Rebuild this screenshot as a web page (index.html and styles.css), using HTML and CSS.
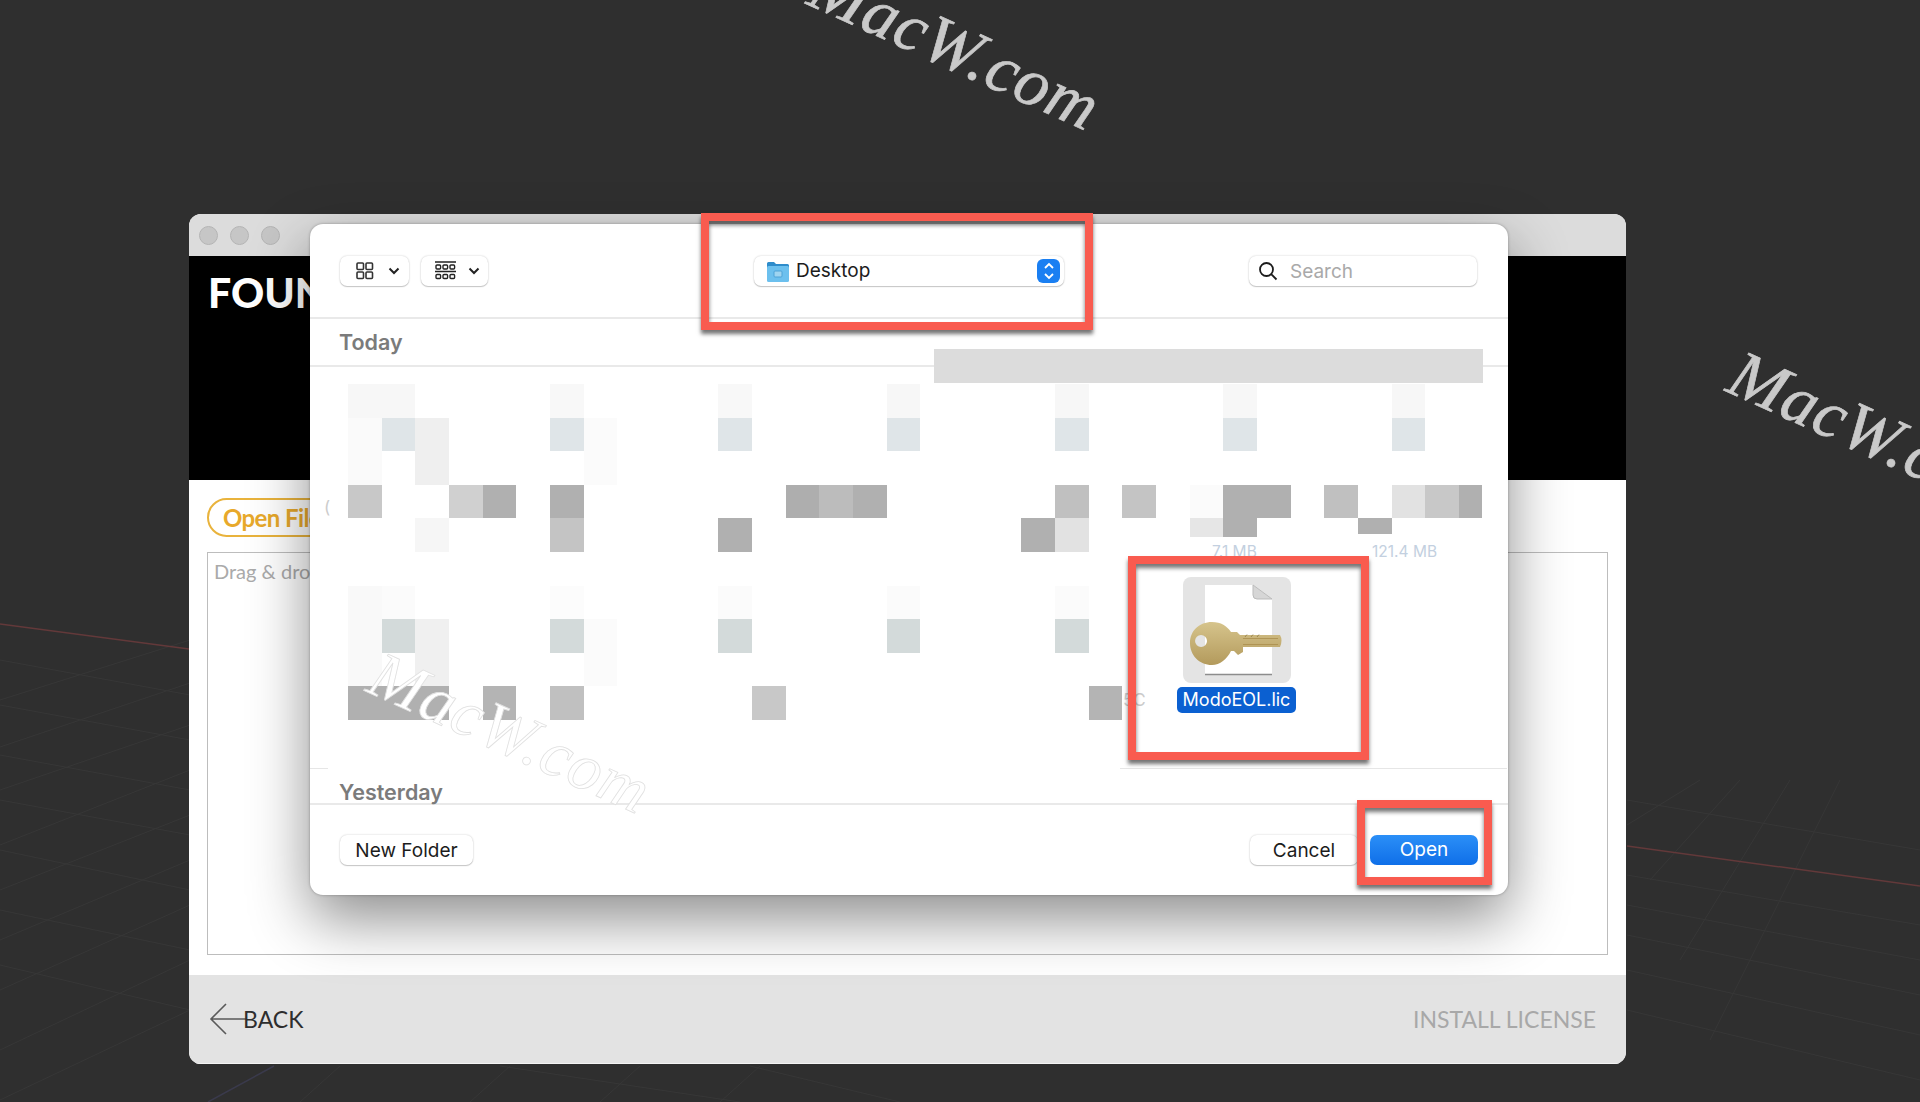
FILE: index.html
```html
<!DOCTYPE html>
<html lang="en">
<head>
    <meta charset="UTF-8">
    <title>Install License</title>
    <link rel="stylesheet" href="styles.css">
</head>
<body>
    <svg class="floor" width="1920" height="1102" viewBox="0 0 1920 1102">
        <g class="floor-a">
            <path d="M0 700L190 640M0 747L190 683M0 790L190 725M0 845L190 770M0 890L190 815M0 940L190 860M0 990L190 905M0 1050L190 960M0 1100L190 1010"/>
            <path d="M300 1102L340 1066M470 1102L510 1066M600 1102L640 1066M720 1102L760 1066"/>
            <path d="M1627 825L1700 780M1650 880L1740 780M1680 960L1790 780M1710 1040L1840 780"/>
        </g>
        <g class="floor-b">
            <path d="M0 660L190 695M0 705L190 740M0 755L190 790M0 800L190 835M0 850L190 890M0 910L190 950M0 965L190 1010"/>
            <path d="M1627 800L1920 850M1627 875L1920 925M1627 905L1920 960M1627 935L1920 995M1627 970L1920 1035M1627 1010L1920 1080"/>
            <path d="M500 1066L740 1102M750 1066L900 1102"/>
        </g>
        <path class="floor-red" d="M0 624L189 649M1627 846L1920 886"/>
        <path class="floor-blue" d="M274 1066L208 1102"/>
    </svg>

    <span class="watermark wm-top">MacW.com</span>
    <span class="watermark wm-right">MacW.com</span>

    <div class="app-window">
        <div class="titlebar">
            <span class="light"></span>
            <span class="light"></span>
            <span class="light"></span>
        </div>
        <div class="brand">FOUNDRY</div>
        <div class="app-body">
            <div><span class="pill">Open File</span></div>
            <div class="dropzone">Drag &amp; drop</div>
        </div>
        <div class="app-footer">
            <span class="back">
                <svg class="back-arrow" width="38" height="32" viewBox="0 0 38 32"><path d="M37 16H2M17 1L2 16L17 31"/></svg>
                <span class="back-label">BACK</span>
            </span>
            <span class="install">INSTALL LICENSE</span>
        </div>
    </div>

    <div class="dialog">
        <div class="toolbar">
            <div class="toolbar-left">
                <div class="btn view-btn view-one">
                    <svg width="18" height="18" viewBox="0 0 18 18"><rect x="1" y="1" width="6.5" height="6.5" rx="1"/><rect x="10" y="1" width="6.5" height="6.5" rx="1"/><rect x="1" y="10" width="6.5" height="6.5" rx="1"/><rect x="10" y="10" width="6.5" height="6.5" rx="1"/></svg>
                    <svg class="chev" width="12" height="8" viewBox="0 0 12 8"><path d="M1.5 1.5L6 6L10.5 1.5"/></svg>
                </div>
                <div class="btn view-btn view-two">
                    <svg class="strip-icon" width="21" height="20" viewBox="0 0 21 20"><path d="M0 1H21M0 10.500H21"/><rect x="1" y="4" width="4.600" height="4" rx="1"/><rect x="8" y="4" width="4.600" height="4" rx="1"/><rect x="15" y="4" width="4.600" height="4" rx="1"/><rect x="1" y="13.500" width="4.600" height="4" rx="1"/><rect x="8" y="13.500" width="4.600" height="4" rx="1"/><rect x="15" y="13.500" width="4.600" height="4" rx="1"/></svg>
                    <svg class="chev" width="12" height="8" viewBox="0 0 12 8"><path d="M1.5 1.5L6 6L10.5 1.5"/></svg>
                </div>
            </div>
            <div class="btn location">
                <svg width="22" height="21" viewBox="0 0 22 21">
                    <path class="folder-back" d="M0 2.500Q0 1 1.500 1H7L9 3H20.500Q22 3 22 4.500V8H0Z"/>
                    <rect class="folder-front" y="5" width="22" height="16" rx="1.500"/>
                    <rect class="folder-mark" x="7" y="10" width="8" height="6" rx="1"/>
                </svg>
                <span class="location-name">Desktop</span>
                <span class="stepper">
                    <svg width="12" height="20" viewBox="0 0 12 20"><path d="M2 7L6 3L10 7M2 13L6 17L10 13"/></svg>
                </span>
            </div>
            <div class="btn search">
                <svg width="20" height="20" viewBox="0 0 20 20"><circle cx="8.500" cy="8.500" r="6.500"/><path d="M13.200 13.200L18.500 18.500"/></svg>
                <span class="search-text">Search</span>
            </div>
        </div>

        <div class="section-head today">Today</div>
        <div class="grey-bar"></div>

        <div class="files">
            <svg class="mosaic" width="1197" height="403" viewBox="0 0 1197 403">
                <g transform="translate(38 17) scale(33.67 33.6)" shape-rendering="crispEdges">
                    <rect x="0" y="0" width="2" height="1" fill="#f7f7f7"/><rect x="0" y="1" width="1" height="2" fill="#fafafa"/><rect x="1" y="1" width="1" height="1" fill="#dfe5e8"/><rect x="2" y="1" width="1" height="2" fill="#efefef"/>
                    <rect x="0" y="3" width="1" height="1" fill="#c8c8c8"/><rect x="3" y="3" width="1" height="1" fill="#d0d0d0"/><rect x="4" y="3" width="1" height="1" fill="#b0b0b0"/><rect x="2" y="4" width="1" height="1" fill="#f6f6f6"/>
                    <rect x="6" y="0" width="1" height="1" fill="#f8f8f8"/><rect x="6" y="1" width="1" height="1" fill="#dfe5e8"/><rect x="7" y="1" width="1" height="2" fill="#fbfbfb"/><rect x="6" y="3" width="1" height="1" fill="#b0b0b0"/><rect x="6" y="4" width="1" height="1" fill="#c4c4c4"/>
                    <rect x="11" y="0" width="1" height="1" fill="#f8f8f8"/><rect x="11" y="1" width="1" height="1" fill="#dfe5e8"/><rect x="11" y="4" width="1" height="1" fill="#b0b0b0"/>
                    <rect x="13" y="3" width="1" height="1" fill="#aeaeae"/><rect x="14" y="3" width="1" height="1" fill="#bcbcbc"/><rect x="15" y="3" width="1" height="1" fill="#b0b0b0"/>
                    <rect x="16" y="0" width="1" height="1" fill="#f7f7f7"/><rect x="16" y="1" width="1" height="1" fill="#dfe5e8"/>
                    <rect x="21" y="0" width="1" height="1" fill="#f7f7f7"/><rect x="21" y="1" width="1" height="1" fill="#dfe5e8"/><rect x="21" y="3" width="1" height="1" fill="#c0c0c0"/><rect x="20" y="4" width="1" height="1" fill="#b0b0b0"/><rect x="21" y="4" width="1" height="1" fill="#e2e2e2"/>
                    <rect x="23" y="3" width="1" height="1" fill="#c4c4c4"/>
                    <rect x="25" y="3" width="1" height="1" fill="#fbfbfb"/><rect x="25" y="4" width="1" height="0.55" fill="#e6e6e6"/>
                    <rect x="26" y="0" width="1" height="1" fill="#f7f7f7"/><rect x="26" y="1" width="1" height="1" fill="#dfe5e8"/><rect x="26" y="3" width="2" height="1" fill="#b0b0b0"/><rect x="26" y="4" width="1" height="0.55" fill="#b0b0b0"/>
                    <rect x="29" y="3" width="1" height="1" fill="#c0c0c0"/><rect x="30" y="4" width="1" height="0.45" fill="#b0b0b0"/>
                    <rect x="31" y="0" width="1" height="1" fill="#f7f7f7"/><rect x="31" y="1" width="1" height="1" fill="#dfe5e8"/><rect x="31" y="3" width="1" height="1" fill="#e2e2e2"/><rect x="32" y="3" width="1" height="1" fill="#c8c8c8"/><rect x="33" y="3" width="0.68" height="1" fill="#b0b0b0"/>

                    <rect x="0" y="6" width="1" height="3" fill="#f9f9f9"/><rect x="1" y="6" width="1" height="1" fill="#fbfbfb"/><rect x="1" y="7" width="1" height="1" fill="#d3dada"/><rect x="2" y="7" width="1" height="2" fill="#f0f0f0"/>
                    <rect x="0" y="9" width="3" height="1" fill="#b0b0b0"/><rect x="4" y="9" width="1" height="1" fill="#b4b4b4"/>
                    <rect x="6" y="6" width="1" height="1" fill="#fcfcfc"/><rect x="6" y="7" width="1" height="1" fill="#d3dada"/><rect x="7" y="7" width="1" height="2" fill="#fbfbfb"/><rect x="6" y="9" width="1" height="1" fill="#c0c0c0"/>
                    <rect x="11" y="6" width="1" height="1" fill="#fbfbfb"/><rect x="11" y="7" width="1" height="1" fill="#d3dada"/><rect x="12" y="9" width="1" height="1" fill="#c8c8c8"/>
                    <rect x="16" y="6" width="1" height="1" fill="#fbfbfb"/><rect x="16" y="7" width="1" height="1" fill="#d3dada"/>
                    <rect x="21" y="6" width="1" height="1" fill="#fbfbfb"/><rect x="21" y="7" width="1" height="1" fill="#d3dada"/><rect x="22" y="9" width="1" height="1" fill="#b4b4b4"/>
                </g>
                <text class="size" x="902" y="190">7.1 MB</text>
                <text class="size" x="1062" y="190">121.4 MB</text>
                <text class="stray" x="813" y="339">5C</text>
                <text class="stray" x="14" y="146">(</text>
                <path class="rule" d="M0 401.500H18M810 401.500H1197"/>
            </svg>
            <div class="picked">
                <svg class="key-file" width="108" height="106" viewBox="0 0 108 106">
                    <defs>
                        <linearGradient id="gold" x1="0" y1="0" x2="0" y2="1">
                            <stop offset="0" stop-color="#d6c48c"/>
                            <stop offset="1" stop-color="#b39a5c"/>
                        </linearGradient>
                    </defs>
                    <path class="doc" d="M22 8H70L89 22V97H22Z"/>
                    <path class="doc-edge" d="M22 97.500H89"/>
                    <path class="doc-fold" d="M70 8L89 22H74Q70 22 70 18Z"/>
                    <path fill="url(#gold)" d="M29 45C38 45 44 49 48 55H54L57 58H97Q100 63 97 70H60V75L55 78L51 74H48C44 82 37 88 29 88C16 88 7 78 7 66C7 54 16 45 29 45ZM18 58A6 6 0 1 0 18.100 70A6 6 0 1 0 18 58Z"/>
                    <path class="key-cuts" d="M60 61.500H95M60 67.500H95"/>
                    <path class="key-teeth" d="M62 60L64 57.500M68 60L70 57.500M74 60L76 57.500"/>
                </svg>
                <span class="picked-name">ModoEOL.lic</span>
            </div>
        </div>

        <div class="section-head yesterday">Yesterday</div>

        <div class="dialog-footer">
            <div class="btn plain-btn new-folder">New Folder</div>
            <div class="dialog-actions">
                <div class="btn plain-btn cancel">Cancel</div>
                <div class="open">Open</div>
            </div>
        </div>
        <span class="watermark wm-dialog">MacW.com</span>
    </div>

    <div class="frame frame-location"></div>
    <div class="frame frame-file"></div>
    <div class="frame frame-open"></div>
</body>
</html>
```

FILE: styles.css
```css
html, body {
    margin: 0;
    padding: 0;
}
body {
    position: relative;
    width: 1920px;
    height: 1102px;
    overflow: hidden;
    background-color: #2f2f2f;
    font-family: Inter, "Liberation Sans", sans-serif;
}

/* backdrop grid */
.floor {
    position: absolute;
    left: 0;
    top: 0;
}
.floor path {
    fill: none;
}
.floor-a path, .floor-b path {
    stroke: #373737;
    stroke-width: 1;
}
.floor-red {
    stroke: #63393a;
    stroke-width: 1.5;
}
.floor-blue {
    stroke: #3a3a4c;
    stroke-width: 1.5;
}

.watermark {
    position: absolute;
    font-family: "Liberation Serif", serif;
    font-style: italic;
    font-size: 68px;
    line-height: 68px;
    letter-spacing: 1px;
    color: #c9c9c9;
    -webkit-text-stroke: 0.7px #c9c9c9;
    white-space: nowrap;
    transform: rotate(24.4deg);
    transform-origin: 0 52px;
}
.wm-top {
    left: 807px;
    top: -53px;
}
.wm-right {
    left: 1726px;
    top: 334px;
}
.wm-dialog {
    left: 56px;
    top: 411px;
    font-size: 66px;
    color: #fff;
    -webkit-text-stroke: 0.8px #e0e0e0;
}

/* installer window */
.app-window {
    position: absolute;
    left: 189px;
    top: 214px;
    width: 1437px;
    height: 850px;
    border-radius: 12px;
    overflow: hidden;
    display: flex;
    flex-direction: column;
    background: #fff;
}
.titlebar {
    height: 42px;
    background-color: #dcdcdc;
    display: flex;
    align-items: center;
    gap: 12px;
    padding-left: 10px;
}
.light {
    width: 17px;
    height: 17px;
    border-radius: 50%;
    background-color: #c6c6c6;
    border: 1px solid #b4b4b4;
}
.brand {
    height: 224px;
    box-sizing: border-box;
    background-color: #000;
    color: #fff;
    font-family: Lato, sans-serif;
    font-weight: 900;
    font-size: 41px;
    line-height: 48px;
    padding: 13px 0 0 19px;
}
.app-body {
    flex: 1;
    padding: 18px 18px 20px 18px;
    display: flex;
    flex-direction: column;
    gap: 15px;
}
.pill {
    display: inline-block;
    box-sizing: border-box;
    height: 39px;
    line-height: 35px;
    padding: 0 30px 0 14px;
    border: 2px solid #e9b33c;
    border-radius: 20px;
    color: #e8a92b;
    font-family: Lato, sans-serif;
    font-weight: 700;
    font-size: 24px;
    letter-spacing: -0.6px;
}
.dropzone {
    flex: 1;
    border: 1px solid #bdbdbd;
    padding: 6px 6px;
    font-family: Lato, sans-serif;
    font-size: 20px;
    color: #aaa;
}
.app-footer {
    height: 89px;
    box-sizing: border-box;
    background-color: #e3e3e3;
    border-bottom: 1px solid #f4f4f4;
    display: flex;
    align-items: center;
    justify-content: space-between;
    padding: 0 30px 0 20px;
    font-family: Lato, sans-serif;
}
.back {
    display: flex;
    align-items: center;
}
.back-arrow path {
    fill: none;
    stroke: #5a5a5a;
    stroke-width: 1.6;
}
.back-label {
    margin-left: -4px;
    font-size: 23px;
    color: #2e2e2e;
}
.install {
    font-size: 23px;
    color: #a8a8a8;
}

/* open dialog */
.dialog {
    position: absolute;
    left: 310px;
    top: 224px;
    width: 1198px;
    height: 671px;
    border-radius: 13px;
    background: #fff;
    box-shadow: 0 24px 60px rgba(0,0,0,0.45), 0 0 3px rgba(0,0,0,0.3);
    display: flex;
    flex-direction: column;
}
.toolbar {
    height: 95px;
    box-sizing: border-box;
    border-bottom: 2px solid #e9e9e9;
    position: relative;
    display: flex;
    align-items: flex-start;
    padding: 32px 30px 0 30px;
}
.toolbar-left {
    display: flex;
    gap: 12px;
    width: 414px;
}
.btn {
    box-sizing: border-box;
    height: 30px;
    border-radius: 7px;
    background: #fff;
    box-shadow: 0 0 2px rgba(0,0,0,0.22), 0 1px 1px rgba(0,0,0,0.18);
    display: flex;
    align-items: center;
}
.view-btn svg {
    fill: none;
    stroke: #333;
    stroke-width: 1.6;
}
.view-btn .strip-icon {
    stroke: #222;
    stroke-width: 1.4;
}
.view-one {
    width: 69px;
    padding-left: 16px;
    gap: 14px;
}
.view-two {
    width: 67px;
    padding-left: 14px;
    gap: 12px;
}
.view-btn .chev path {
    stroke: #222;
    stroke-width: 2;
}
.location {
    width: 310px;
    padding-left: 13px;
    position: relative;
}
.folder-back {
    fill: #2e8ccb;
}
.folder-front {
    fill: #6cc0ee;
}
.folder-mark {
    fill: #9ed4f0;
    stroke: #4da2d6;
}
.location-name {
    margin-left: 7px;
    margin-top: -1px;
    font-size: 19px;
    color: #1c1c1c;
}
.stepper {
    position: absolute;
    right: 4px;
    top: 3px;
    width: 23px;
    height: 24px;
    border-radius: 6px;
    background-color: #1a7ff2;
    display: flex;
    align-items: center;
    justify-content: center;
}
.stepper path {
    fill: none;
    stroke: #fff;
    stroke-width: 1.8;
}
.search {
    width: 228px;
    margin-left: 185px;
    padding-left: 9px;
}
.search svg {
    fill: none;
    stroke: #1c1c1c;
    stroke-width: 1.8;
}
.search-text {
    margin-left: 12px;
    margin-top: 1px;
    font-size: 19px;
    color: #a9a9a9;
}
.section-head {
    box-sizing: border-box;
    padding-left: 29px;
    font-size: 21.500px;
    font-weight: 600;
    color: #7b7b7b;
}
.today {
    height: 48px;
    line-height: 46px;
    border-bottom: 2px solid #e9e9e9;
}
.grey-bar {
    position: absolute;
    left: 624px;
    top: 125px;
    width: 549px;
    height: 34px;
    background-color: #dcdcdc;
}
.files {
    position: relative;
    height: 403px;
}
.mosaic {
    display: block;
}
.size {
    font-family: Inter, sans-serif;
    font-size: 15.500px;
    fill: #c3d0e0;
}
.stray {
    font-family: Inter, sans-serif;
    font-size: 17px;
    fill: #cccccc;
}
.rule {
    fill: none;
    stroke: #e6e6e6;
}
.picked {
    position: absolute;
    left: 867px;
    top: 210px;
    width: 119px;
    display: flex;
    flex-direction: column;
    align-items: center;
    gap: 4px;
}
.key-file {
    display: block;
    border-radius: 8px;
    background-color: #e4e4e4;
}
.doc {
    fill: #fff;
}
.doc-edge {
    stroke: #8d8d8d;
    stroke-width: 1.5;
}
.doc-fold {
    fill: #d6d6d6;
    stroke: #bbb;
}
.key-cuts {
    stroke: #a98d4d;
    stroke-width: 0.8;
}
.key-teeth {
    stroke: #8f7a45;
    stroke-width: 0.8;
}
.picked-name {
    width: 119px;
    height: 26px;
    line-height: 26px;
    border-radius: 5px;
    background-color: #0b60d1;
    color: #fff;
    font-size: 18px;
    text-align: center;
}
.yesterday {
    height: 35px;
    padding-top: 10px;
    line-height: 24px;
    border-bottom: 2px solid #e9e9e9;
}
.dialog-footer {
    flex: 1;
    display: flex;
    justify-content: space-between;
    padding: 30px 30px 0 30px;
}
.dialog-actions {
    display: flex;
    gap: 12px;
}
.plain-btn {
    justify-content: center;
    font-size: 19px;
    color: #1c1c1c;
}
.new-folder {
    width: 133px;
}
.cancel {
    width: 108px;
}
.open {
    box-sizing: border-box;
    width: 108px;
    height: 30px;
    line-height: 30px;
    border-radius: 7px;
    background: linear-gradient(#2b8ff7, #0f6fe8);
    color: #fff;
    font-size: 19px;
    text-align: center;
}

/* red annotation boxes */
.frame {
    position: absolute;
    box-sizing: border-box;
    border: 8px solid #f95b4f;
    box-shadow: 0 4px 4px rgba(0,0,0,0.55), inset 0 4px 4px rgba(0,0,0,0.55);
}
.frame-location {
    left: 701px;
    top: 213px;
    width: 392px;
    height: 117px;
}
.frame-file {
    left: 1128px;
    top: 556px;
    width: 241px;
    height: 204px;
}
.frame-open {
    left: 1357px;
    top: 800px;
    width: 135px;
    height: 85px;
}
```
